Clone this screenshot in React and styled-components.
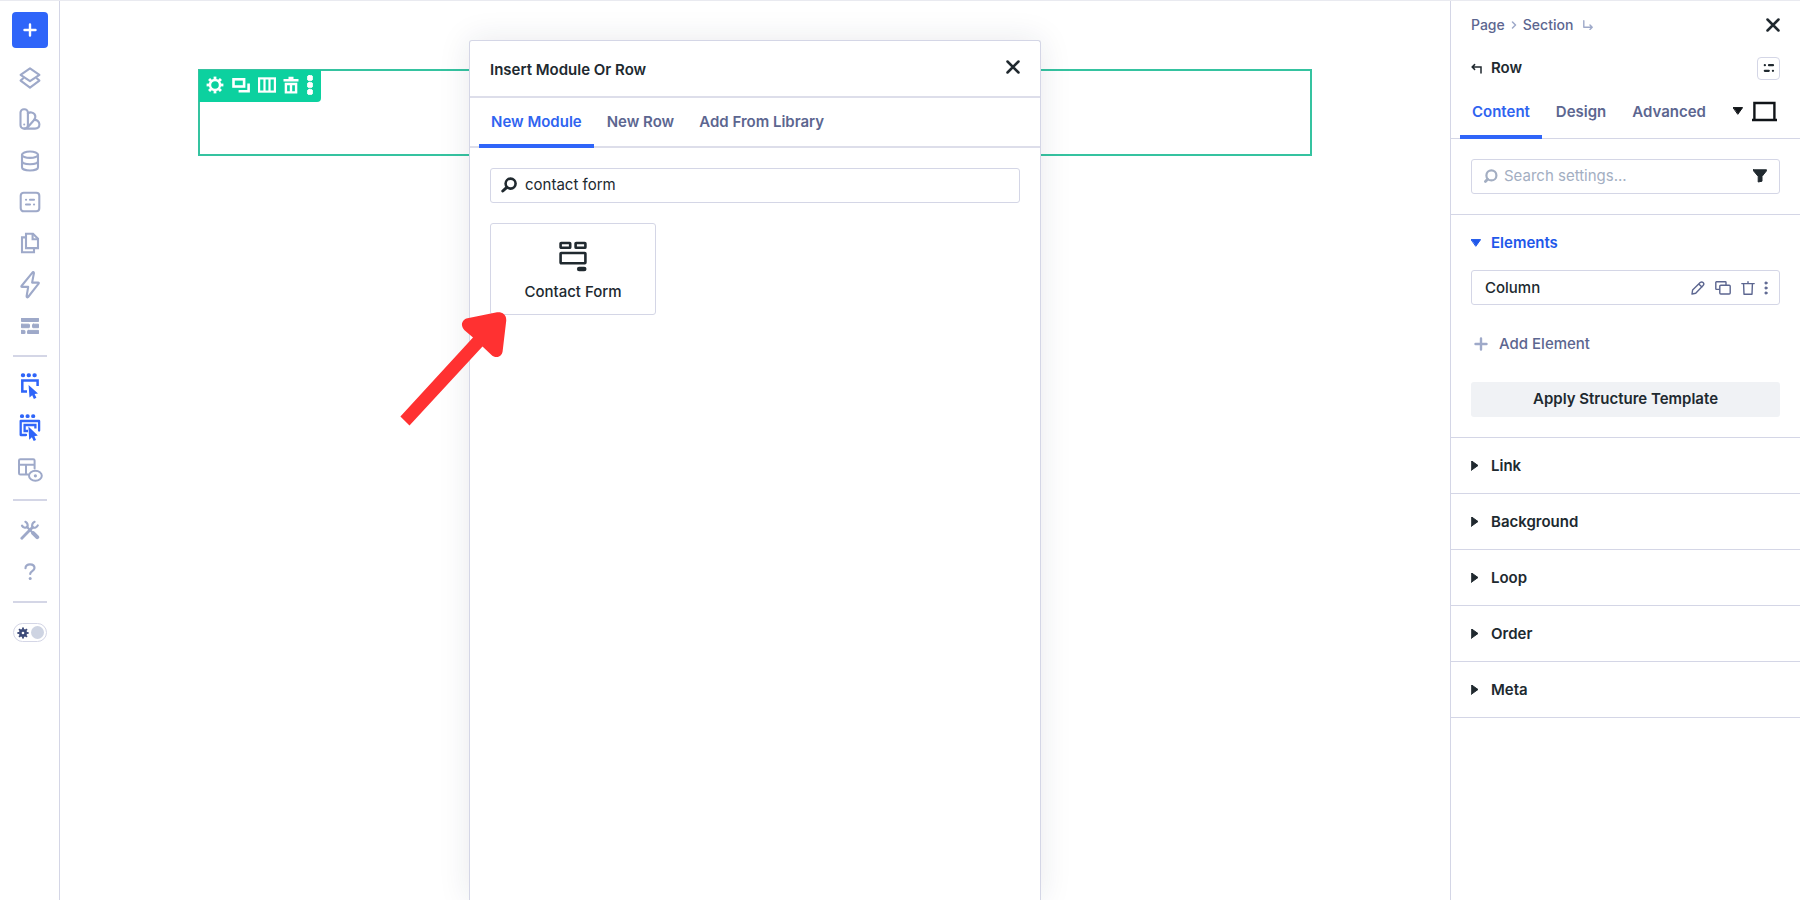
import React from "react";
import styled, { createGlobalStyle, css } from "styled-components";

const colors = {
  blue: "#2f65f9",
  blueText: "#2f64f0",
  dark: "#20292f",
  slate: "#5c6690",
  muted: "#9ea9c9",
  placeholder: "#a3aec2",
  line: "#d4d6e6",
  green: "#0cd19f",
  greenLine: "#35c3a0",
  red: "#ff3131",
};

const GlobalStyle = createGlobalStyle`
  * {
    box-sizing: border-box;
  }

  body {
    margin: 0;
    background: #fff;
    color: ${colors.dark};
    font-family: Inter, "Liberation Sans", sans-serif;
    font-size: 15px;
    line-height: 20px;
  }

  button,
  input {
    font: inherit;
    color: inherit;
  }

  svg {
    display: block;
    flex: none;
  }
`;

/* ---------- icons ---------- */

function Icon({ width, height, children, stroke = 2, ...props }) {
  return (
    <svg
      width={width}
      height={height}
      viewBox={`0 0 ${width} ${height}`}
      fill="none"
      stroke="currentColor"
      strokeWidth={stroke}
      strokeLinecap="round"
      strokeLinejoin="round"
      aria-hidden="true"
      {...props}
    >
      {children}
    </svg>
  );
}

const PlusIcon = () => (
  <Icon width={14} height={14} stroke={2.4}>
    <path d="M7 1.5v11M1.5 7h11" />
  </Icon>
);

const LayersIcon = () => (
  <Icon width={22} height={22} stroke={2.1}>
    <path d="M11 1.4 20.4 7.8 11 14.2 1.6 7.800Z" />
    <path d="M4 11.400 1.600 13.600 11 20.600l9.400-7L18 11.400" />
  </Icon>
);

const SwatchesIcon = () => (
  <Icon width={22} height={22} stroke={2.1}>
    <rect x="1.500" y="1.200" width="7.400" height="19.400" rx="3.400" />
    <path d="M8.900 5.400c2.200-1.800 5.300-1 6.600.8 1.400 2 1 3.700-.2 5.500L8.900 19" />
    <path d="M15.200 11.900c2.400-.4 5.200 1.600 5.200 4.400 0 2.500-1.800 4.300-4.400 4.300H5.500" />
    <circle cx="5.200" cy="16.400" r="1" fill="currentColor" stroke="none" />
  </Icon>
);

const DatabaseIcon = () => (
  <Icon width={20} height={22} stroke={2.1}>
    <ellipse cx="10" cy="4.700" rx="8" ry="3.200" />
    <path d="M2 4.700v12.500c0 1.900 3.500 3.300 8 3.300s8-1.400 8-3.300V4.700" />
    <path d="M2 11c0 1.900 3.500 3.200 8 3.200s8-1.300 8-3.200" />
  </Icon>
);

const SettingsPanelIcon = () => (
  <Icon width={22} height={22} stroke={2.1}>
    <rect x="1.700" y="1.700" width="18.600" height="18.600" rx="3" />
    <path d="M7 8.700h.1M11 8.700h4M7 13.500h4M15 13.500h.1" />
  </Icon>
);

const PagesIcon = () => (
  <Icon width={20} height={22} stroke={2.1} strokeLinejoin="miter">
    <path d="M6 1.800h7l5 5v9.300H6Z" />
    <path d="M12.600 2v5.200h5.200" />
    <path d="M5.800 5.400H2v14.800h12v-3.800" />
  </Icon>
);

const BoltIcon = () => (
  <Icon width={20} height={28} stroke={2.1}>
    <path d="M12.600 1.400 1.500 15c-.3.500-.1.900.5.900h6.200L6.600 25.300c0 1.200.8 1.400 1.500.7L18.600 12.600c.4-.6.1-1-.5-1h-6l1.800-9.400c.1-1-.7-1.500-1.300-.8Z" />
  </Icon>
);

const WireframeIcon = () => (
  <Icon width={18} height={16} fill="currentColor" stroke="none">
    <rect x="0" y="0" width="18" height="3.500" rx=".8" />
    <rect x="0" y="6.200" width="8.500" height="3.500" rx=".8" />
    <rect x="11.500" y="6.200" width="6.500" height="3.500" rx=".8" />
    <rect x="0" y="12.400" width="4" height="3.500" rx=".8" />
    <rect x="6.500" y="12.400" width="11.500" height="3.500" rx=".8" />
  </Icon>
);

const HoverModeIcon = () => (
  <Icon width={20} height={26} stroke={2.500}>
    <path d="M2.800 2.200h.4M8.600 2.200h.4M14.400 2.200h.4" strokeWidth="4" />
    <path
      d="M7 18.600H2.300V7.400h15.300v5.600"
      strokeLinecap="butt"
      strokeLinejoin="miter"
    />
    <path
      d="M8.600 12 18 20.600l-3.400.5 1.800 3.600-2.500 1.200-1.700-3.600-2.700 2.300Z"
      fill="currentColor"
      stroke="none"
    />
  </Icon>
);

const ClickModeIcon = () => (
  <Icon width={22} height={28} stroke={2.300}>
    <path d="M2.800 2.200h.4M8.400 2.200h.4M14 2.200h.4" strokeWidth="3.800" />
    <path d="M7 21H1.700V7h18.400v9.600" />
    <path d="M9 17H5.600v-6h10.800v3.400" strokeLinecap="butt" strokeLinejoin="miter" />
    <path
      d="M9.400 12.400 18.800 21.600l-3.400.6 1.600 3.800-2.300 1-1.800-3.800-2.700 2.600Z"
      fill="currentColor"
      stroke="none"
    />
  </Icon>
);

const LayoutEyeIcon = () => (
  <Icon width={26} height={24} stroke={2}>
    <path d="M11 16.600H3.400A1.400 1.400 0 0 1 2 15.200V2.600A1.400 1.400 0 0 1 3.400 1.200h12.800a1.400 1.400 0 0 1 1.400 1.400v8M2 6.800h15.600M9 6.800v9.800" />
    <ellipse cx="18.400" cy="17.800" rx="6.400" ry="5" />
    <circle cx="18.400" cy="17.800" r="1.600" fill="currentColor" stroke="none" />
  </Icon>
);

const ToolsIcon = () => (
  <Icon width={20} height={20} stroke={2.200}>
    <path d="M1.800 18.200 12.600 7.200" strokeWidth="2.800" />
    <path d="M17.800 5.400a4 4 0 0 1-5.200 2 4 4 0 0 1 2-5.600" />
    <path d="M2 5.600a4 4 0 0 0 5.200 1.700A4 4 0 0 0 5.400 1.800" />
    <path d="m6.800 6.800 6.400 6.400" />
    <path d="m13.200 13.200 4 4" strokeWidth="4" />
  </Icon>
);

const HelpIcon = () => (
  <Icon width={12} height={18} stroke={2.200}>
    <path d="M1.500 5.200c0-2.300 1.900-3.800 4.500-3.800s4.500 1.400 4.500 3.600c0 3-4.300 3.200-4.300 6" />
    <circle cx="6.200" cy="15.400" r="1.500" fill="currentColor" stroke="none" />
  </Icon>
);

const gearTeeth = [0, 45, 90, 135, 180, 225, 270, 315];

const GearIcon = ({ size = 18, stroke = 2.4, radius = 5 }) => (
  <Icon width={size} height={size} viewBox="0 0 18 18" stroke={stroke}>
    <circle cx="9" cy="9" r={radius} />
    {gearTeeth.map((angle) => (
      <path
        key={angle}
        d="M9 3.400V.6"
        transform={`rotate(${angle} 9 9)`}
        strokeLinecap="butt"
        strokeWidth="2.800"
      />
    ))}
  </Icon>
);

const DuplicateBoldIcon = () => (
  <Icon width={18} height={17} stroke={2.600} strokeLinecap="butt" strokeLinejoin="miter">
    <rect x="1.500" y="2.300" width="10.600" height="7.200" />
    <path d="M6.600 14.300h10V6.400" />
  </Icon>
);

const ColumnsIcon = () => (
  <Icon width={18} height={16} stroke={2.200} strokeLinejoin="miter">
    <rect x="1.100" y="1.400" width="15.800" height="13.200" />
    <path d="M6.500 2v12M11.500 2v12" strokeLinecap="butt" />
  </Icon>
);

const TrashBoldIcon = () => (
  <Icon width={16} height={18} stroke={2.400} strokeLinecap="butt" strokeLinejoin="miter">
    <path d="M.5 4.200h15M5.500 2h5" />
    <path d="M2.900 8h10.200v8.400H2.900ZM8 8v8" />
  </Icon>
);

const DotsBoldIcon = () => (
  <Icon width={6} height={20} fill="currentColor" stroke="none">
    <rect x=".4" y=".4" width="5.200" height="5.200" rx="2" />
    <rect x=".4" y="7.400" width="5.200" height="5.200" rx="2" />
    <rect x=".4" y="14.400" width="5.200" height="5.200" rx="2" />
  </Icon>
);

const CloseIcon = () => (
  <Icon width={14} height={14} stroke={2.500}>
    <path d="m1.500 1.500 11 11M12.500 1.500l-11 11" />
  </Icon>
);

const SearchIcon = () => (
  <Icon width={16} height={16} stroke={2.600}>
    <circle cx="9.600" cy="6.600" r="5" />
    <path d="m5.800 10.400-4 3.600" strokeWidth="3" />
  </Icon>
);

const SearchSmallIcon = () => (
  <Icon width={16} height={16} stroke={2.200}>
    <circle cx="9.400" cy="7.400" r="5" />
    <path d="M5.600 11.200 3.400 13.400" strokeWidth="2.800" />
  </Icon>
);

const ContactFormIcon = () => (
  <Icon width={28} height={31} stroke={2.600}>
    <rect x="1.600" y="2" width="9.600" height="4.800" rx=".6" />
    <rect x="16.600" y="2" width="9.800" height="4.800" rx=".6" />
    <rect x="1.600" y="12" width="24.800" height="10.200" rx=".6" />
    <path d="M20.200 28h5" strokeWidth="4.600" />
  </Icon>
);

const CrumbIcon = () => (
  <Icon width={6} height={8} stroke={1.500}>
    <path d="m1.500 1 3 3-3 3" />
  </Icon>
);

const ChildArrowIcon = () => (
  <Icon width={10} height={10} stroke={1.400}>
    <path d="M.8.8v6.400H9M7 5l2.200 2.200L7 9.400" />
  </Icon>
);

const BackArrowIcon = () => (
  <Icon width={11} height={11} stroke={1.500} strokeLinejoin="miter">
    <path d="M10 10V4H1.500M3.600 1.600 1.200 4l2.400 2.400" />
  </Icon>
);

const TuneIcon = () => (
  <Icon width={12} height={10} stroke={2.200}>
    <path d="M1.800 2.200h.1M6 2.200h4M1.800 7.800h4M9.900 7.800h.1" />
  </Icon>
);

const CaretIcon = ({ open }) => (
  <Icon width={10} height={10} stroke="none">
    <path d={open ? "M.4 1.600h9.200L5 8Z" : "M.4-.2 7 4.500.4 9.200Z"} fill="currentColor" />
  </Icon>
);

const LaptopIcon = () => (
  <Icon width={25} height={21} stroke={2.400} strokeLinejoin="miter" strokeLinecap="butt">
    <path d="M2.400 19V2h20v17M0 19h25" />
  </Icon>
);

const FilterIcon = () => (
  <Icon width={14} height={14} stroke="none">
    <path
      d="M.6.800h12.800c.4 0 .6.500.3.800L9 7.400v4.800L5.200 13V7.400L.3 1.600C0 1.300.200.800.6.800Z"
      fill="currentColor"
    />
  </Icon>
);

const PencilIcon = () => (
  <Icon width={14} height={14} stroke={1.400}>
    <path d="M1 13l.6-4 7.600-7.400c1-.9 2.200-.7 2.900 0 .8.800.9 2 0 2.900L4.700 12.200 1 13ZM8 3.200l2.900 2.900" />
  </Icon>
);

const DuplicateIcon = () => (
  <Icon width={16} height={14} stroke={1.400}>
    <path d="M4 8.400H1.400a.6.600 0 0 1-.6-.6V1.400a.6.600 0 0 1 .6-.6h9a.6.600 0 0 1 .6.600V3.800" />
    <rect x="4.800" y="4.200" width="10.400" height="8.800" rx="1" />
  </Icon>
);

const TrashIcon = () => (
  <Icon width={14} height={14} stroke={1.400}>
    <path d="M.8 2.600h12.400M7 .8v1.400M2.600 2.800l.4 10.400h8l.4-10.400" />
  </Icon>
);

const DotsIcon = () => (
  <Icon width={4} height={14} fill="currentColor" stroke="none">
    <circle cx="2" cy="2" r="1.100" />
    <circle cx="2" cy="7" r="1.100" />
    <circle cx="2" cy="12" r="1.100" />
  </Icon>
);

/* ---------- shared parts ---------- */

const IconButton = styled.button`
  display: flex;
  align-items: center;
  justify-content: center;
  padding: 0;
  border: 0;
  background: none;
  color: ${(props) => props.$color || colors.dark};
  cursor: pointer;
`;

const Tab = styled.button`
  padding: 1px 12px 0;
  margin-bottom: -2px;
  border: 0;
  border-bottom: 4px solid ${(props) => (props.$active ? colors.blue : "transparent")};
  background: none;
  color: ${(props) => (props.$active ? colors.blueText : colors.slate)};
  font-weight: 600;
  white-space: nowrap;
  cursor: pointer;
`;

const SearchField = styled.label`
  display: flex;
  align-items: center;
  gap: ${(props) => props.$gap || 8}px;
  height: 35px;
  padding: 0 12px 1px 10px;
  border: 1px solid ${colors.line};
  border-radius: 3px;
  color: ${(props) => props.$color || colors.dark};

  input {
    flex: 1;
    min-width: 0;
    padding: 0;
    border: 0;
    outline: 0;
    background: none;
    color: ${colors.dark};

    &::placeholder {
      color: ${colors.placeholder};
      opacity: 1;
    }
  }
`;

/* ---------- page ---------- */

const Page = styled.div`
  display: grid;
  grid-template-columns: 60px 1fr 350px;
  height: 100vh;
  border-top: 1px solid #e9eaf0;
  overflow: hidden;
`;

const Sidebar = styled.nav`
  display: flex;
  flex-direction: column;
  align-items: center;
  padding-top: 11px;
  border-right: 1px solid ${colors.line};
`;

const AddButton = styled(IconButton)`
  width: 36px;
  height: 36px;
  margin-bottom: 9px;
  border-radius: 4px;
  background: ${colors.blue};
`;

const ToolGroup = styled.div`
  display: grid;
  grid-auto-rows: 1fr;
  width: 34px;
  height: ${(props) => props.$height}px;
`;

const ToolDivider = styled.hr`
  width: 34px;
  height: 2px;
  margin: 8px 0;
  border: 0;
  background: ${colors.line};
`;

const ThemeToggle = styled.button`
  display: flex;
  align-items: center;
  justify-content: space-between;
  width: 34px;
  height: 19px;
  margin-top: 12px;
  padding: 0 2px 0 3px;
  border: 1px solid ${colors.line};
  border-radius: 10px;
  background: #fff;
  color: #3c4a78;
  cursor: pointer;
`;

const ToggleKnob = styled.span`
  width: 13px;
  height: 13px;
  border-radius: 50%;
  background: #ced4e2;
`;

const Canvas = styled.main`
  position: relative;
  padding-top: 68px;
`;

const RowOutline = styled.section`
  width: calc(80% + 2px);
  height: 87px;
  margin: 0 auto;
  border: 2px solid ${colors.greenLine};
`;

const RowToolbar = styled.div`
  display: flex;
  align-items: center;
  justify-content: space-between;
  width: 122px;
  height: 32px;
  margin: -1px 0 0 -1px;
  padding: 0 8px 2px 7px;
  border-radius: 0 0 4px 0;
  background: ${colors.green};
`;

const Modal = styled.div`
  position: absolute;
  top: 39px;
  bottom: 0;
  left: 50%;
  width: 572px;
  margin-left: -286px;
  border: 1px solid ${colors.line};
  border-bottom: 0;
  border-radius: 3px 3px 0 0;
  background: #fff;
  box-shadow: 0 0 32px rgba(30, 40, 70, 0.1);
`;

const ModalHeader = styled.header`
  display: flex;
  align-items: center;
  justify-content: space-between;
  height: 57px;
  padding: 0 20px 4px;
  border-bottom: 2px solid #dddeea;

  h2 {
    margin: 6px 0 0;
    font-size: 15px;
    font-weight: 600;
  }
`;

const ModalTabs = styled.div`
  display: flex;
  gap: 1px;
  height: 50px;
  padding: 0 9px;
  border-bottom: 2px solid #dddeea;
`;

const ModalBody = styled.div`
  display: grid;
  gap: 20px;
  padding: 20px;
`;

const ModuleGrid = styled.div`
  display: grid;
  grid-template-columns: repeat(3, 1fr);
  gap: 16px;
`;

const ModuleCard = styled.button`
  display: flex;
  flex-direction: column;
  align-items: center;
  gap: 10px;
  height: 92px;
  padding: 17px 0 0;
  border: 1px solid ${colors.line};
  border-radius: 3px;
  background: #fff;
  color: ${colors.dark};
  font-weight: 500;
  cursor: pointer;
`;

const Pointer = styled.svg`
  position: absolute;
  top: 311px;
  left: 50%;
  margin-left: -356px;
`;

const Panel = styled.aside`
  border-left: 1px solid ${colors.line};
`;

const PanelLine = styled.div`
  display: flex;
  align-items: center;
  justify-content: space-between;
  padding: 0 20px;
`;

const Breadcrumb = styled(PanelLine)`
  height: 34px;
  padding-top: 14px;
`;

const Crumbs = styled.div`
  display: flex;
  align-items: center;
  gap: 6px;
  color: ${colors.muted};
  font-size: 14px;

  a {
    color: ${colors.slate};
    font-weight: 500;
    text-decoration: none;
  }

  svg:last-child {
    margin-left: 4px;
  }
`;

const ElementTitle = styled(PanelLine)`
  height: 24px;
  margin-top: 21px;

  h2 {
    display: flex;
    align-items: center;
    gap: 9px;
    margin: 0;
    font-size: 15px;
    font-weight: 600;
  }
`;

const TuneButton = styled(IconButton)`
  width: 23px;
  height: 23px;
  border: 1px solid ${colors.line};
  border-radius: 4px;
`;

const PanelTabs = styled.div`
  display: flex;
  gap: 2px;
  height: 59px;
  padding: 0 23px 0 9px;
  border-bottom: 1px solid ${colors.line};
`;

const PanelTab = styled(Tab)`
  margin-bottom: -1px;
  padding-top: 8px;
`;

const ViewButton = styled(IconButton)`
  gap: 9px;
  margin-left: auto;
  padding-top: 4px;
  color: #101418;
`;

const PanelSearch = styled.div`
  padding: 20px;
  border-bottom: 1px solid ${colors.line};
`;

const Group = styled.section`
  border-bottom: 1px solid ${colors.line};
`;

const GroupTitle = styled.button`
  display: flex;
  align-items: center;
  gap: 10px;
  width: 100%;
  height: 55px;
  padding: 0 20px;
  border: 0;
  background: none;
  color: ${colors.dark};
  font-weight: 600;
  cursor: pointer;

  ${(props) =>
    props.$open &&
    css`
      color: #1f58ea;
    `}
`;

const GroupBody = styled.div`
  display: grid;
  padding: 0 20px 20px;
`;

const ElementItem = styled.div`
  display: flex;
  align-items: center;
  height: 35px;
  padding: 0 11px 0 13px;
  border: 1px solid ${colors.line};
  border-radius: 3px;
  font-weight: 500;

  span {
    flex: 1;
  }
`;

const ItemActions = styled.div`
  display: flex;
  align-items: center;
  gap: 10px;

  button:last-child {
    margin-left: -1px;
  }
`;

const AddElement = styled.button`
  display: flex;
  align-items: center;
  gap: 11px;
  height: 35px;
  margin: 21px 0;
  padding: 0 3px;
  border: 0;
  background: none;
  color: ${colors.slate};
  font-weight: 500;
  cursor: pointer;

  svg {
    color: ${colors.muted};
  }
`;

const TemplateButton = styled.button`
  height: 35px;
  padding: 0 0 1px;
  border: 0;
  border-radius: 3px;
  background: #f0f2f5;
  color: ${colors.dark};
  font-weight: 600;
  cursor: pointer;
`;

const mainTools = [
  ["Layers", LayersIcon],
  ["Design variables", SwatchesIcon],
  ["Data", DatabaseIcon],
  ["Page settings", SettingsPanelIcon],
  ["Pages", PagesIcon],
  ["Interactions", BoltIcon],
  ["Wireframe", WireframeIcon],
];

const modeTools = [
  ["Hover mode", HoverModeIcon, colors.blue],
  ["Click mode", ClickModeIcon, colors.blue],
  ["View mode", LayoutEyeIcon],
];

const helpTools = [
  ["Tools", ToolsIcon],
  ["Help", HelpIcon],
];

const rowActions = [
  ["Row settings", GearIcon],
  ["Duplicate row", DuplicateBoldIcon],
  ["Column structure", ColumnsIcon],
  ["Delete row", TrashBoldIcon],
  ["More", DotsBoldIcon],
];

const elementActions = [
  ["Edit", PencilIcon],
  ["Duplicate", DuplicateIcon],
  ["Delete", TrashIcon],
  ["More", DotsIcon],
];

const groups = ["Link", "Background", "Loop", "Order", "Meta"];

function Tools({ items, height }) {
  return (
    <ToolGroup $height={height}>
      {items.map(([label, Glyph, color]) => (
        <IconButton key={label} aria-label={label} $color={color || colors.muted}>
          <Glyph />
        </IconButton>
      ))}
    </ToolGroup>
  );
}

function InsertModal() {
  return (
    <Modal role="dialog" aria-labelledby="insert-title">
      <ModalHeader>
        <h2 id="insert-title">Insert Module Or Row</h2>
        <IconButton aria-label="Close">
          <CloseIcon />
        </IconButton>
      </ModalHeader>
      <ModalTabs role="tablist">
        <Tab role="tab" aria-selected="true" $active>
          New Module
        </Tab>
        <Tab role="tab">New Row</Tab>
        <Tab role="tab">Add From Library</Tab>
      </ModalTabs>
      <ModalBody>
        <SearchField>
          <SearchIcon />
          <input type="text" aria-label="Search modules" defaultValue="contact form" />
        </SearchField>
        <ModuleGrid>
          <ModuleCard>
            <ContactFormIcon />
            Contact Form
          </ModuleCard>
        </ModuleGrid>
      </ModalBody>
    </Modal>
  );
}

function SettingsPanel() {
  return (
    <Panel>
      <Breadcrumb>
        <Crumbs>
          <a href="#page">Page</a>
          <CrumbIcon />
          <a href="#section">Section</a>
          <ChildArrowIcon />
        </Crumbs>
        <IconButton aria-label="Close panel">
          <CloseIcon />
        </IconButton>
      </Breadcrumb>
      <ElementTitle>
        <h2>
          <BackArrowIcon />
          Row
        </h2>
        <TuneButton aria-label="Options">
          <TuneIcon />
        </TuneButton>
      </ElementTitle>
      <PanelTabs role="tablist">
        <PanelTab role="tab" aria-selected="true" $active>
          Content
        </PanelTab>
        <PanelTab role="tab">Design</PanelTab>
        <PanelTab role="tab">Advanced</PanelTab>
        <ViewButton aria-label="Breakpoint">
          <CaretIcon open />
          <LaptopIcon />
        </ViewButton>
      </PanelTabs>
      <PanelSearch>
        <SearchField $gap={6} $color={colors.placeholder}>
          <SearchSmallIcon />
          <input type="text" aria-label="Search settings" placeholder="Search settings..." />
          <IconButton aria-label="Filter">
            <FilterIcon />
          </IconButton>
        </SearchField>
      </PanelSearch>
      <Group>
        <GroupTitle $open aria-expanded="true">
          <CaretIcon open />
          Elements
        </GroupTitle>
        <GroupBody>
          <ElementItem>
            <span>Column</span>
            <ItemActions>
              {elementActions.map(([label, Glyph]) => (
                <IconButton key={label} aria-label={label} $color={colors.slate}>
                  <Glyph />
                </IconButton>
              ))}
            </ItemActions>
          </ElementItem>
          <AddElement>
            <PlusIcon />
            Add Element
          </AddElement>
          <TemplateButton>Apply Structure Template</TemplateButton>
        </GroupBody>
      </Group>
      {groups.map((name) => (
        <Group key={name}>
          <GroupTitle aria-expanded="false">
            <CaretIcon />
            {name}
          </GroupTitle>
        </Group>
      ))}
    </Panel>
  );
}

function App() {
  return (
    <>
      <GlobalStyle />
      <Page>
        <Sidebar>
          <AddButton aria-label="Add" $color="#fff">
            <PlusIcon />
          </AddButton>
          <Tools items={mainTools} height={290} />
          <ToolDivider />
          <Tools items={modeTools} height={126} />
          <ToolDivider />
          <Tools items={helpTools} height={84} />
          <ToolDivider />
          <ThemeToggle aria-label="Toggle dark mode">
            <GearIcon size={12} radius={4} stroke={4} />
            <ToggleKnob />
          </ThemeToggle>
        </Sidebar>
        <Canvas>
          <RowOutline>
            <RowToolbar>
              {rowActions.map(([label, Glyph]) => (
                <IconButton key={label} aria-label={label} $color="#fff">
                  <Glyph />
                </IconButton>
              ))}
            </RowToolbar>
          </RowOutline>
          <InsertModal />
          <Pointer width="110" height="116" viewBox="0 0 110 116" aria-hidden="true">
            <path
              d="M1.400 104.500 74 25.500 65.500 18.200C60.500 13 63.500 7.300 68.500 6.200L98 .3C103.200-.3 107.800 2.500 107.200 9L103.600 39.500C102.600 45.200 96.500 46.800 92.500 43L83.500 34.500 10.500 113.500Z"
              fill={colors.red}
            />
          </Pointer>
        </Canvas>
        <SettingsPanel />
      </Page>
    </>
  );
}

export default App;
